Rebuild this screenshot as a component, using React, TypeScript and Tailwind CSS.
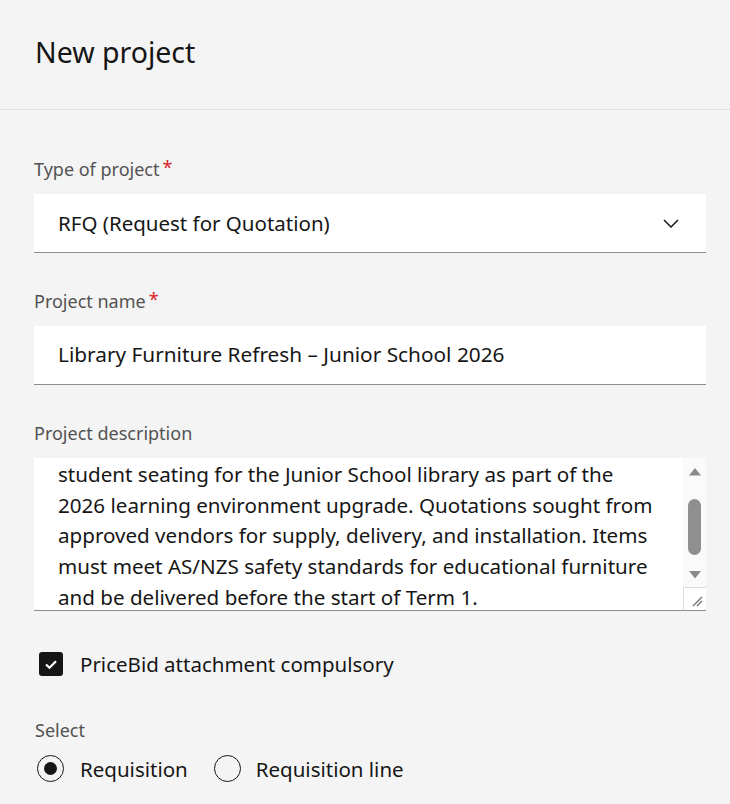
import { useState } from "react";

const descriptionLines = [
  "Replacement of ageing bookshelves, reading tables and ergonomic",
  "student seating for the Junior School library as part of the",
  "2026 learning environment upgrade. Quotations sought from",
  "approved vendors for supply, delivery, and installation. Items",
  "must meet AS/NZS safety standards for educational furniture",
  "and be delivered before the start of Term 1.",
];

const FieldLabel = ({ text, required }: { text: string; required?: boolean }) => (
  <div className="text-[18px] leading-[24px] text-[#525252] mb-[13px] flex items-start">
    <span>{text}</span>
    {required && <span className="text-[#da1e28] ml-[3px] leading-[20px]">*</span>}
  </div>
);

const TextareaScrollbar = () => (
  <div className="w-[23px] flex flex-col bg-[#fafafa]">
    <div className="flex-1 flex flex-col items-center pt-[10px]">
      <svg width="12" height="8" viewBox="0 0 12 8">
        <path d="M6 0 L12 7.5 L0 7.5 Z" fill="#8a8a8a" />
      </svg>
      <div className="w-[13px] h-[56px] rounded-full bg-[#8f8f8f] mt-[23px]" />
      <svg width="12" height="8" viewBox="0 0 12 8" className="mt-[16px]">
        <path d="M0 0 L12 0 L6 7.5 Z" fill="#8a8a8a" />
      </svg>
    </div>
    <div className="h-[23px] border-t border-l border-[#dcdcdc] bg-white flex items-end justify-end pr-[3px] pb-[3px]">
      <svg width="12" height="12" viewBox="0 0 12 12">
        <path d="M2 11 L11 2 M6 11 L11 6" stroke="#6f6f6f" strokeWidth="1.3" />
      </svg>
    </div>
  </div>
);

export default function App() {
  const [compulsory, setCompulsory] = useState(true);
  const [mode, setMode] = useState<"requisition" | "line">("requisition");

  return (
    <div className="w-[730px] h-[804px] bg-[#f4f4f4] overflow-hidden text-[#161616] font-['Noto_Sans',sans-serif]">
      {/* Header */}
      <div className="h-[110px] border-b border-[#e0e0e0] pt-[32px] px-[35px]">
        <h1 className="text-[28.5px] leading-[40px] font-normal">New project</h1>
      </div>

      <div className="pl-[34px] pr-[24px] pt-[47px]">
        {/* Type of project */}
        <FieldLabel text="Type of project" required />
        <div className="h-[59px] bg-white border-b border-[#8d8d8d] flex items-center justify-between pl-[24px] pr-[27px]">
          <span className="text-[20.5px]">RFQ (Request for Quotation)</span>
          <svg width="16" height="9" viewBox="0 0 16 9">
            <path d="M1 1 L8 8 L15 1" fill="none" stroke="#161616" strokeWidth="1.5" />
          </svg>
        </div>

        {/* Project name */}
        <div className="mt-[36px]">
          <FieldLabel text="Project name" required />
          <div className="h-[59px] bg-white border-b border-[#8d8d8d] flex items-center px-[24px]">
            <span className="text-[20.8px]">Library Furniture Refresh – Junior School 2026</span>
          </div>
        </div>

        {/* Project description (textarea scrolled down one line) */}
        <div className="mt-[36px]">
          <FieldLabel text="Project description" />
          <div className="h-[153px] bg-white border-b border-[#8d8d8d] flex">
            <div className="flex-1 overflow-hidden pl-[24px]">
              <div className="mt-[-30px] text-[20.6px] leading-[30.75px] whitespace-nowrap">
                {descriptionLines.map((line) => (
                  <div key={line}>{line}</div>
                ))}
              </div>
            </div>
            <TextareaScrollbar />
          </div>
        </div>

        {/* Checkbox */}
        <label className="mt-[41px] flex items-center gap-[17px] pl-[5px] cursor-pointer">
          <button
            type="button"
            onClick={() => setCompulsory(!compulsory)}
            className={`w-[24px] h-[24px] rounded-[3px] flex items-center justify-center ${
              compulsory ? "bg-[#161616]" : "border border-[#161616] bg-transparent"
            }`}
          >
            {compulsory && (
              <svg width="14" height="11" viewBox="0 0 14 11">
                <path d="M2 5.5 L5.5 8.8 L12 2.2" fill="none" stroke="#fff" strokeWidth="2.2" />
              </svg>
            )}
          </button>
          <span className="text-[20.5px] leading-[24px]">PriceBid attachment compulsory</span>
        </label>

        {/* Radio group */}
        <div className="mt-[42px]">
          <div className="text-[18px] leading-[24px] text-[#525252] mb-[13px] pl-[1px]">Select</div>
          <div className="flex items-center gap-[26px] pl-[3px]">
            <button type="button" onClick={() => setMode("requisition")} className="flex items-center gap-[16px]">
              <span className="w-[27px] h-[27px] rounded-full border-[1.5px] border-[#161616] flex items-center justify-center">
                {mode === "requisition" && <span className="w-[13px] h-[13px] rounded-full bg-[#161616]" />}
              </span>
              <span className="text-[20.5px] leading-[24px]">Requisition</span>
            </button>
            <button type="button" onClick={() => setMode("line")} className="flex items-center gap-[15px]">
              <span className="w-[27px] h-[27px] rounded-full border-[1.5px] border-[#161616] flex items-center justify-center">
                {mode === "line" && <span className="w-[13px] h-[13px] rounded-full bg-[#161616]" />}
              </span>
              <span className="text-[20.5px] leading-[24px]">Requisition line</span>
            </button>
          </div>
        </div>
      </div>
    </div>
  );
}
